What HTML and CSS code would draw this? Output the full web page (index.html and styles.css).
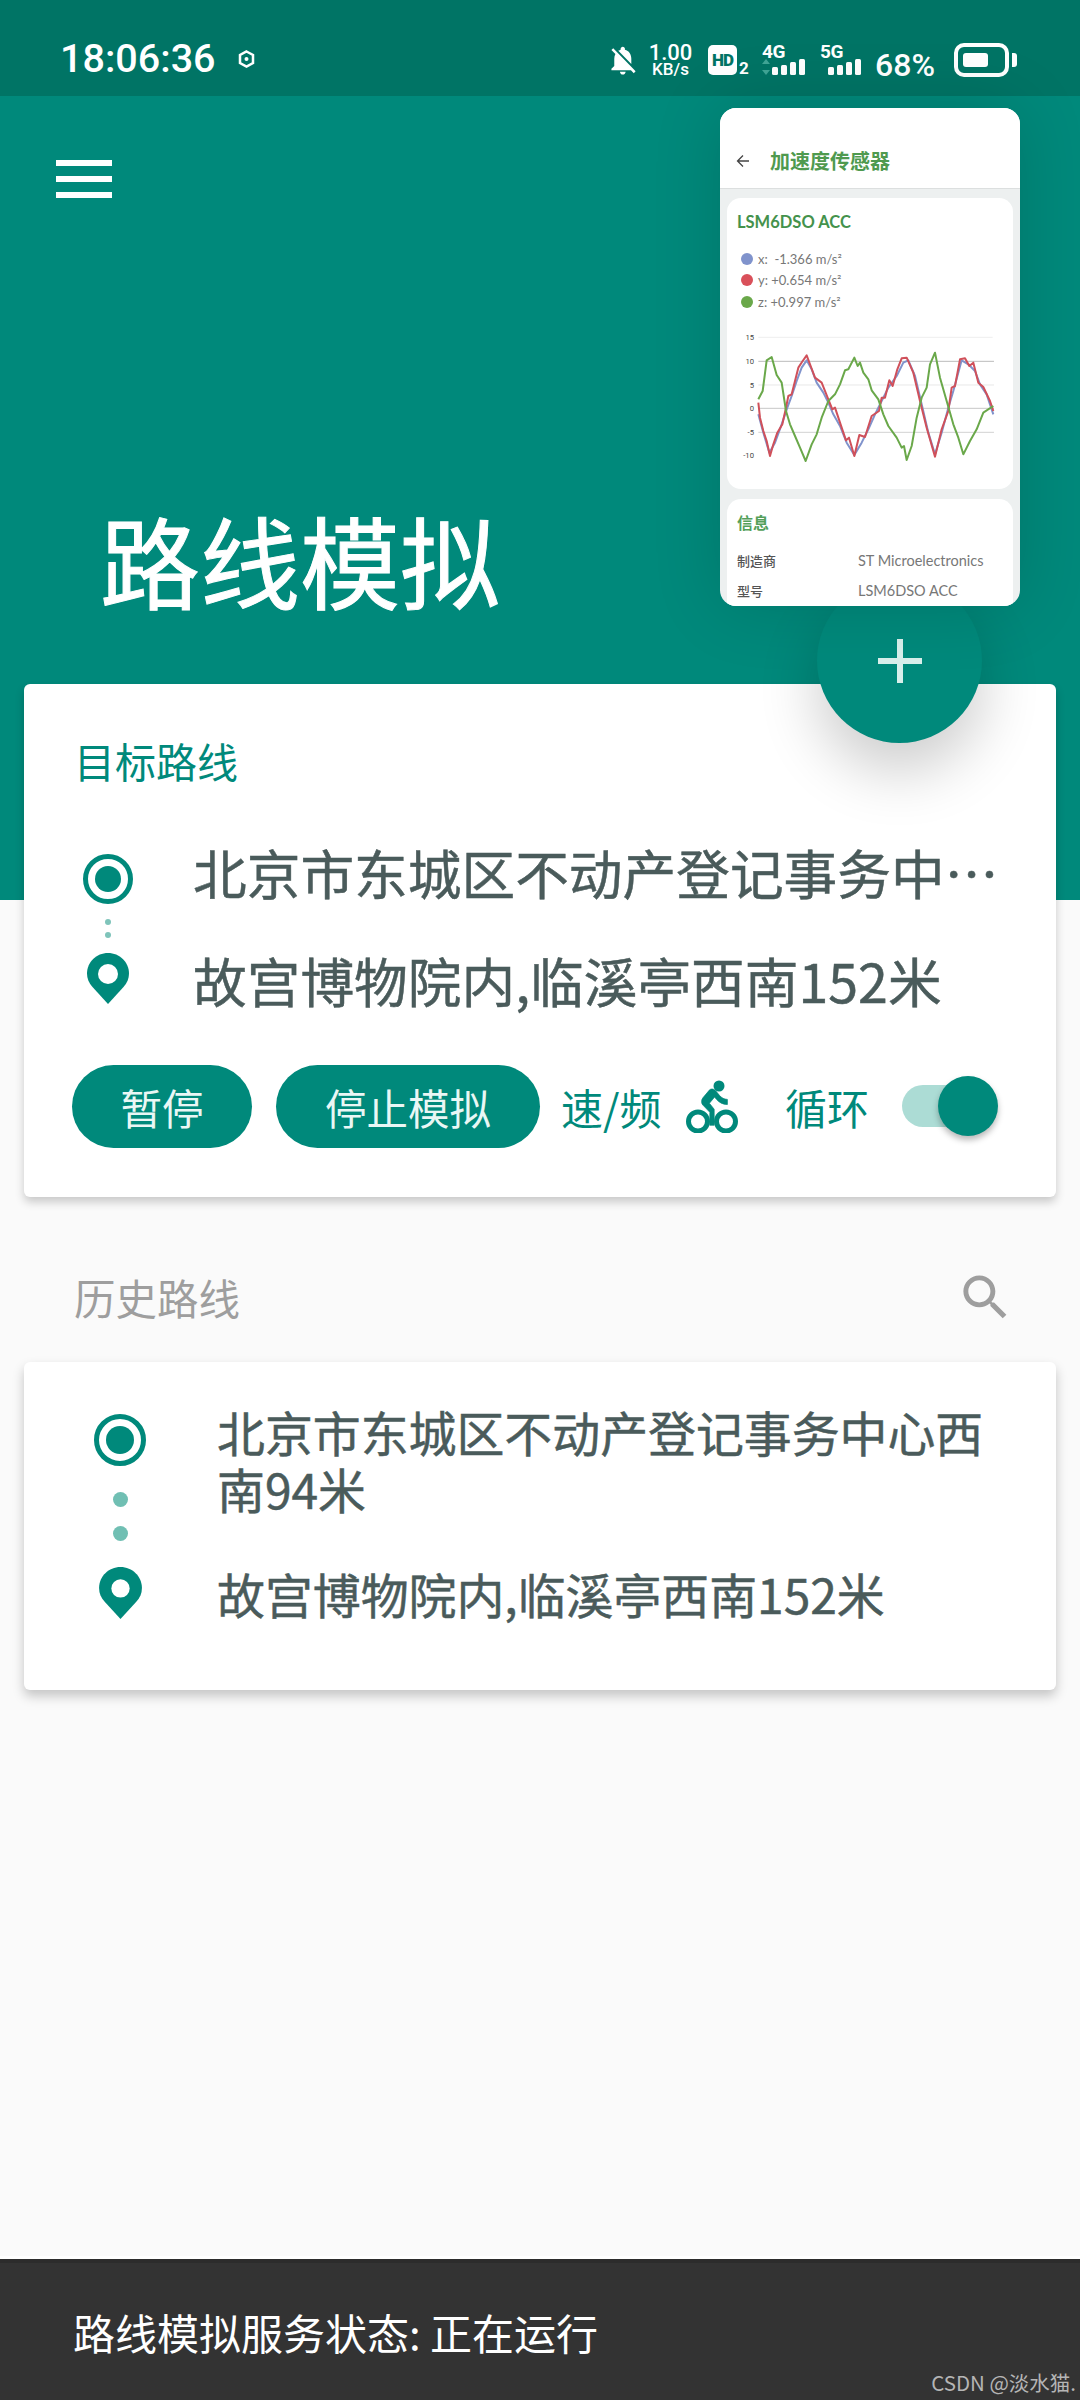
FILE: index.html
```html
<!DOCTYPE html>
<html lang="zh-CN">
<head>
<meta charset="utf-8">
<title>路线模拟</title>
<link rel="stylesheet" href="styles.css">
</head>
<body>
<div class="app">
  <div class="status">
    <div class="status-left">
      <span class="time">18:06:36</span>
      <svg class="gear" viewBox="0 0 17 18"><path d="M8.5 1.5 15 5v8l-6.500 3.500L2 13V5z" fill="none" stroke="#fff" stroke-width="2.500"/><circle cx="8.500" cy="9" r="2" fill="#fff"/></svg>
    </div>
    <div class="status-right">
      <svg class="bell" viewBox="3 2 19 21" preserveAspectRatio="none"><path fill="#fff" d="M20 18.690L7.840 6.140 5.270 3.490 4 4.760l2.800 2.800v.010c-.520.990-.800 2.160-.800 3.420v5l-2 2v1h13.730l2 2L21 19.720l-1-1.030zM12 22c1.110 0 2-.890 2-2h-4c0 1.110.890 2 2 2zm6-7.320V11c0-3.080-1.640-5.640-4.500-6.320V4c0-.830-.670-1.500-1.500-1.500s-1.500.670-1.500 1.500v.680c-.150.030-.290.080-.420.120-.100.030-.200.070-.300.110h-.010c-.200.080-.400.180-.590.280-.100.050-.200.120-.300.180L18 14.680z"/></svg>
      <div class="speed"><span class="speed-num">1.00</span><span class="speed-unit">KB/s</span></div>
      <div class="hd"><span class="hd-box">HD</span><span class="hd-sub">2</span></div>
      <div class="net">
        <span class="net-label net-label-4g">4G</span>
        <svg class="net-bars" viewBox="0 0 44 16"><path d="M4 0 8 5H0z" fill="#3fa596"/><path d="M4 16 8 11H0z" fill="#3fa596"/><rect x="10" y="8" width="6" height="8" rx="1.500" fill="#fff"/><rect x="19" y="6" width="6" height="10" rx="1.500" fill="#fff"/><rect x="28" y="3" width="6" height="13" rx="1.500" fill="#fff"/><rect x="37" y="0" width="6" height="16" rx="1.500" fill="#fff"/></svg>
      </div>
      <div class="net net-5g">
        <span class="net-label">5G</span>
        <svg class="net-bars net-bars-5g" viewBox="0 0 34 16"><rect x="0" y="8" width="6" height="8" rx="1.500" fill="#fff"/><rect x="9" y="6" width="6" height="10" rx="1.500" fill="#fff"/><rect x="18" y="3" width="6" height="13" rx="1.500" fill="#fff"/><rect x="27" y="0" width="6" height="16" rx="1.500" fill="#fff"/></svg>
      </div>
      <span class="battery-pct">68%</span>
      <div class="battery"><div class="battery-body"><div class="battery-fill"></div></div><div class="battery-tip"></div></div>
    </div>
  </div>

  <div class="hero">
    <div class="menu"><span></span><span></span><span></span></div>
    <div class="hero-title">路线模拟</div>
  </div>

  <div class="content">
    <section class="card card-target">
      <h2 class="target-title">目标路线</h2>
      <div class="route route-large">
        <div class="route-icons">
          <div class="origin"></div>
          <div class="dot"></div>
          <div class="dot dot-last"></div>
          <svg class="pin" viewBox="0 0 42 51"><path fill="#00897b" d="M21 0C9.400 0 0 9.200 0 20.500c0 5.500 2 9.500 5.500 13.500L21 51l15.500-17c3.500-4 5.500-8 5.500-13.500C42 9.200 32.600 0 21 0z"/><circle cx="21" cy="21" r="10" fill="#fff"/></svg>
        </div>
        <div class="route-text">
          <div class="route-line">北京市东城区不动产登记事务中…</div>
          <div class="route-line">故宫博物院内,临溪亭西南152米</div>
        </div>
      </div>
      <div class="actions">
        <button class="btn btn-pause">暂停</button>
        <button class="btn btn-stop">停止模拟</button>
        <span class="action-label label-speed">速/频</span>
        <svg class="bike" viewBox="0 0 52 53">
          <circle cx="33" cy="6" r="5.500" fill="#00897b"/>
          <circle cx="12" cy="41.500" r="9.500" fill="none" stroke="#00897b" stroke-width="5"/>
          <circle cx="40" cy="41.500" r="9.500" fill="none" stroke="#00897b" stroke-width="5"/>
          <path transform="scale(2.167 2.585) translate(0 -1.500)" fill="#00897b" stroke="#00897b" stroke-width=".3" d="M10.800 10.500l2.400-2.400.8.800c1.300 1.300 3 2.100 5.100 2.100V9c-1.500 0-2.700-.600-3.600-1.500l-1.900-1.900c-.500-.400-1-.600-1.600-.600s-1.100.200-1.400.600L7.800 8.400c-.400.400-.600.900-.600 1.400 0 .600.200 1.100.600 1.400L11 14v5h2v-6.200l-2.200-2.300z"/>
        </svg>
        <span class="action-label label-loop">循环</span>
        <div class="switch"><div class="switch-track"></div><div class="switch-thumb"></div></div>
      </div>
    </section>

    <div class="history-head">
      <span class="history-title">历史路线</span>
      <svg class="search" viewBox="0 0 24 24"><path fill="#9e9e9e" d="M15.500 14h-.790l-.280-.270C15.410 12.590 16 11.110 16 9.500 16 5.910 13.090 3 9.500 3S3 5.910 3 9.500 5.910 16 9.500 16c1.610 0 3.090-.590 4.230-1.570l.270.280v.790l5 4.990L20.490 19l-4.990-5zm-6 0C7.010 14 5 11.990 5 9.500S7.010 5 9.500 5 14 7.010 14 9.500 11.990 14 9.500 14z"/></svg>
    </div>

    <section class="card card-history">
      <div class="hist-icons">
        <div class="origin origin-hist"></div>
        <div class="hist-dot"></div>
        <div class="hist-dot hist-dot-last"></div>
        <svg class="pin pin-hist" viewBox="0 0 42 51"><path fill="#00897b" d="M21 0C9.400 0 0 9.200 0 20.500c0 5.500 2 9.500 5.500 13.500L21 51l15.500-17c3.500-4 5.500-8 5.500-13.500C42 9.200 32.600 0 21 0z"/><circle cx="21" cy="21" r="9" fill="#fff"/></svg>
      </div>
      <div class="hist-text">
        <div class="hist-from">北京市东城区不动产登记事务中心西南94米</div>
        <div class="hist-to">故宫博物院内,临溪亭西南152米</div>
      </div>
    </section>
  </div>

  <div class="footer">
    <span class="footer-text">路线模拟服务状态: 正在运行</span>
    <span class="watermark">CSDN @淡水猫.</span>
  </div>

  <button class="fab" aria-label="添加"><svg class="fab-plus" viewBox="0 0 44 44"><path d="M19 0h6v19h19v6H25v19h-6V25H0v-6h19z" fill="#d8efeb"/></svg></button>

  <aside class="mini">
    <div class="mini-bar">
      <svg class="mini-back" viewBox="0 0 14 14"><path d="M13 7H2M7 1.500 1.500 7 7 12.500" fill="none" stroke="#444" stroke-width="1.300"/></svg>
      <span class="mini-title">加速度传感器</span>
    </div>
    <div class="mini-body">
      <div class="mini-card mini-card-chart">
        <div class="mini-h">LSM6DSO ACC</div>
        <div class="legend">
          <div class="legend-row"><i class="swatch swatch-x"></i>x:&nbsp; -1.366 m/s²</div>
          <div class="legend-row"><i class="swatch swatch-y"></i>y: +0.654 m/s²</div>
          <div class="legend-row"><i class="swatch swatch-z"></i>z: +0.997 m/s²</div>
        </div>
        <svg class="chart" viewBox="81 90 858 400">
          <g fill="none" stroke-width="2">
            <path d="M175 109H878" stroke="#e6e6e6"/>
            <path d="M175 181H882" stroke="#999"/>
            <path d="M175 252H882" stroke="#ddd"/>
            <path d="M175 322H882" stroke="#aaa"/>
            <path d="M175 394H882" stroke="#bbb"/>
          </g>
          <g class="ticks" text-anchor="end">
            <text x="162" y="118">15</text>
            <text x="162" y="190">10</text>
            <text x="162" y="261">5</text>
            <text x="162" y="331">0</text>
            <text x="162" y="402">-5</text>
            <text x="162" y="472">-10</text>
          </g>
          <g fill="none" stroke-width="6" stroke-linejoin="round">
            <polyline stroke="#8093cc" points="175,340 190,395 208,455 225,425 245,370 262,320 275,285 290,240 305,200 320,178 335,205 350,245 370,275 385,305 400,340 420,375 440,425 463,462 485,425 505,385 525,340 545,300 565,260 590,225 610,185 625,178 645,225 665,310 685,395 705,460 725,395 745,320 760,270 785,178 805,190 825,210 840,250 860,280 880,340"/>
            <polyline stroke="#d0505a" points="175,305 180,350 190,390 200,420 210,465 220,430 232,395 247,370 258,320 265,285 275,280 285,240 295,200 308,180 320,163 332,195 345,230 365,245 385,295 397,325 405,320 420,365 438,418 447,410 463,465 478,402 495,408 515,345 537,330 545,290 555,290 568,238 578,255 592,205 605,172 620,170 640,215 660,300 680,380 705,467 725,385 745,330 755,260 765,255 780,175 795,172 808,195 820,185 835,245 850,258 870,300 880,330"/>
            <polyline stroke="#6aa84a" points="175,295 188,270 200,178 215,168 230,222 245,245 258,330 270,370 285,405 300,440 317,480 335,430 350,400 365,350 385,300 405,280 420,250 435,208 445,205 463,170 473,195 480,185 490,215 505,235 515,268 535,295 550,340 565,375 590,410 605,440 612,435 620,477 635,435 650,350 665,290 680,260 690,190 705,155 720,230 740,300 760,370 775,410 790,460 810,420 830,385 850,335 880,315"/>
          </g>
        </svg>
      </div>
      <div class="mini-card mini-card-info">
        <div class="mini-h mini-h-info">信息</div>
        <div class="info-row"><span class="info-k">制造商</span><span class="info-v">ST Microelectronics</span></div>
        <div class="info-row"><span class="info-k">型号</span><span class="info-v">LSM6DSO ACC</span></div>
      </div>
    </div>
  </aside>
</div>
</body>
</html>
```

FILE: styles.css
```css
* { box-sizing: border-box; margin: 0; padding: 0; }
html, body { width: 1080px; height: 2400px; overflow: hidden; }
body { font-family: "Noto Sans CJK SC", "Noto Sans", sans-serif; background: #fafafa; }
.app { position: relative; width: 1080px; height: 2400px; display: flex; flex-direction: column; overflow: hidden; }

/* status bar */
.status { height: 96px; flex: none; background: #007465; color: #fff; display: flex; justify-content: space-between; align-items: center; font-family: Roboto, sans-serif; padding: 0 63px 0 60px; }
.status-left { display: flex; align-items: center; }
.time { font-size: 39.500px; font-weight: 500; line-height: 46px; width: 155px; white-space: nowrap; margin-top: 22px; }
.gear { width: 17px; height: 18px; margin: 22px 0 0 23px; }
.status-right { display: flex; align-items: flex-start; height: 96px; padding-top: 43px; }
.bell { width: 27px; height: 30px; margin: 3px 10px 0 0; }
.speed { width: 47px; display: flex; flex-direction: column; align-items: center; margin-right: 14px; }
.speed-num { font-size: 22px; font-weight: 500; line-height: 19px; }
.speed-unit { font-size: 17px; font-weight: 500; line-height: 15px; }
.hd { display: flex; align-items: flex-end; width: 43px; margin: 2px 11px 0 0; }
.hd-box { width: 29px; height: 30px; background: #fff; color: #007465; border-radius: 5px; font-size: 17px; font-weight: 900; line-height: 30px; text-align: center; letter-spacing: -1px; }
.hd-sub { font-size: 17px; font-weight: 700; line-height: 14px; margin-left: 2px; }
.net { width: 44px; display: flex; flex-direction: column; margin: 1px 14px 0 0; }
.net-5g { width: 42px; margin-right: 13px; }
.net-label { font-size: 19px; font-weight: 700; line-height: 15px; letter-spacing: -.5px; }
.net-bars { width: 44px; height: 16px; }
.net-bars-5g { width: 34px; margin-left: 8px; }
.battery-pct { font-size: 32px; font-weight: 500; line-height: 36px; width: 65px; margin: 4px 14px 0 0; white-space: nowrap; }
.battery { display: flex; align-items: center; }
.battery-body { width: 55px; height: 34px; border: 4px solid #fff; border-radius: 10px; padding: 6px 5px; }
.battery-fill { width: 25px; height: 14px; background: #fff; border-radius: 3px; }
.battery-tip { width: 5px; height: 14px; background: #fff; border-radius: 0 3px 3px 0; margin-left: 3px; }

/* hero */
.hero { height: 804px; flex: none; background: #00897b; color: #fff; padding: 64px 0 0 56px; }
.menu { display: flex; flex-direction: column; gap: 10px; width: 56px; }
.menu span { height: 6px; background: #fff; }
.hero-title { font-size: 100px; font-weight: 400; -webkit-text-stroke: 1px #fff; line-height: 140px; margin: 291px 0 0 44px; white-space: nowrap; }

/* cards */
.content { flex: 1; margin-top: -216px; padding: 0 24px; position: relative; }
.card { background: #fff; border-radius: 6px; box-shadow: 0 5px 10px rgba(0,0,0,.2); }
.card-target { height: 513px; padding-top: 48px; }
.target-title { font-size: 41px; font-weight: 400; line-height: 56px; color: #00897b; margin-left: 50px; }
.route { display: flex; margin-top: 33px; }
.route-icons { width: 52px; margin-left: 58px; padding-top: 33px; display: flex; flex-direction: column; align-items: center; flex: none; }
.origin { width: 50px; height: 50px; border-radius: 50%; border: 5px solid #00897b; position: relative; display: flex; align-items: center; justify-content: center; flex: none; }
.origin::after { content: ""; width: 26px; height: 26px; border-radius: 50%; background: #00897b; }
.dot { width: 6px; height: 6px; border-radius: 50%; background: #7fc4ba; margin-top: 15px; }
.dot-last { margin-top: 7px; }
.pin { width: 42px; height: 51px; margin-top: 15px; flex: none; }
.route-text { width: 807px; margin-left: 59px; }
.route-line { font-size: 53.700px; font-weight: 400; -webkit-text-stroke: .5px #4a5b5b; line-height: 108px; height: 108px; margin-top: -3px; margin-bottom: 3px; color: #4a5b5b; white-space: nowrap; }
.actions { display: flex; align-items: center; height: 83px; margin-top: 28px; padding-left: 48px; }
.btn { border: 0; height: 83px; border-radius: 42px; background: #00897b; color: #e9f7f5; font-family: inherit; font-size: 41.500px; line-height: 56px; }
.btn-pause { width: 180px; margin-right: 24px; }
.btn-stop { width: 264px; margin-right: 21px; }
.action-label { font-size: 42px; line-height: 56px; color: #00897b; white-space: nowrap; }
.label-speed { width: 101px; margin-right: 24px; }
.bike { width: 52px; height: 53px; margin: -1px 47px 0 0; flex: none; }
.label-loop { width: 80px; margin-right: 37px; }
.switch { position: relative; width: 96px; height: 60px; flex: none; margin-top: -1px; display: flex; align-items: center; }
.switch-track { width: 88px; height: 42px; border-radius: 21px; background: #acdcd5; }
.switch-thumb { position: absolute; right: 0; top: 0; width: 60px; height: 60px; border-radius: 50%; background: #00897b; box-shadow: 0 4px 6px rgba(0,0,0,.28); }

/* history */
.history-head { display: flex; justify-content: space-between; align-items: flex-start; height: 165px; padding: 72px 41px 0 50px; }
.history-title { font-size: 41.500px; line-height: 56px; color: #9e9e9e; }
.search { width: 59px; height: 59px; margin-top: -1px; }
.card-history { height: 328px; display: flex; padding-top: 41px; box-shadow: 0 6px 12px rgba(0,0,0,.22); }
.hist-icons { width: 52px; margin: 11px 0 0 70px; display: flex; flex-direction: column; align-items: center; flex: none; }
.origin-hist { width: 52px; height: 52px; }
.origin-hist::after { width: 28px; height: 28px; }
.hist-dot { width: 15px; height: 15px; border-radius: 50%; background: #70bfb3; margin-top: 26px; }
.hist-dot-last { margin-top: 19px; }
.pin-hist { width: 43px; height: 52px; margin-top: 26px; }
.hist-text { width: 770px; margin-left: 71px; font-size: 47.900px; font-weight: 400; -webkit-text-stroke: .5px #4a5b5b; line-height: 57px; color: #4a5b5b; }
.hist-to { margin-top: 48px; white-space: nowrap; }

/* footer */
.footer { flex: none; height: 141px; background: #333; border-top: 4px solid #2c2c2c; box-shadow: 0 -3px 0 #fff; position: relative; display: flex; align-items: center; padding: 0 0 0 73px; }
.footer-text { font-size: 42px; line-height: 58px; color: #fff; white-space: nowrap; margin-top: 1px; }
.watermark { position: absolute; right: 4px; bottom: 3px; font-size: 20.500px; line-height: 30px; color: #b5b5b5; white-space: nowrap; }

/* floating */
.fab { position: absolute; left: 817px; top: 578px; width: 165px; height: 165px; border: 0; border-radius: 50%; background: #00897b; box-shadow: 0 28px 60px rgba(0,0,0,.2); display: flex; align-items: center; justify-content: center; }
.fab-plus { width: 44px; height: 44px; }

.mini { position: absolute; left: 720px; top: 108px; width: 300px; height: 498px; border-radius: 16px; overflow: hidden; background: #edf0f0; box-shadow: 0 0 70px rgba(0,0,0,.14); display: flex; flex-direction: column; }
.mini-bar { height: 81px; flex: none; background: #fff; border-bottom: 1px solid #dcdfdf; display: flex; align-items: center; padding: 26px 0 0 16px; }
.mini-back { width: 14px; height: 14px; margin-right: 20px; }
.mini-title { font-size: 20px; font-weight: 700; color: #4f9a4f; line-height: 28px; white-space: nowrap; }
.mini-body { padding: 9px 7px 0; display: flex; flex-direction: column; gap: 10px; }
.mini-card { background: #fff; border-radius: 14px; padding: 0 10px; flex: none; }
.mini-card-chart { height: 291px; padding-top: 13px; }
.mini-h { font-family: Lato, sans-serif; font-size: 16.500px; font-weight: 700; line-height: 22px; color: #44924c; white-space: nowrap; }
.legend { margin: 15px 0 0 4px; }
.legend-row { display: flex; align-items: center; height: 21.500px; font-family: Lato, sans-serif; font-size: 13px; color: #777; white-space: pre; }
.swatch { width: 12px; height: 12px; border-radius: 50%; margin-right: 5px; flex: none; }
.swatch-x { background: #8093cc; }
.swatch-y { background: #d9505a; }
.swatch-z { background: #6aa84a; }
.chart { display: block; width: 286px; height: 133.330px; margin: 18px -10px 0; }
.ticks text { font-family: Roboto, sans-serif; font-size: 23px; fill: #444; }
.mini-card-info { height: 120px; padding-top: 11px; }
.mini-h-info { font-family: "Noto Sans CJK SC", sans-serif; font-size: 16px; line-height: 24px; color: #54a05a; }
.info-row { display: flex; align-items: center; height: 30px; }
.mini-h-info + .info-row { margin-top: 11px; }
.info-k { width: 121px; font-size: 13px; font-weight: 500; color: #555; }
.info-v { font-family: Lato, sans-serif; font-size: 14.500px; color: #777; white-space: nowrap; }
```
